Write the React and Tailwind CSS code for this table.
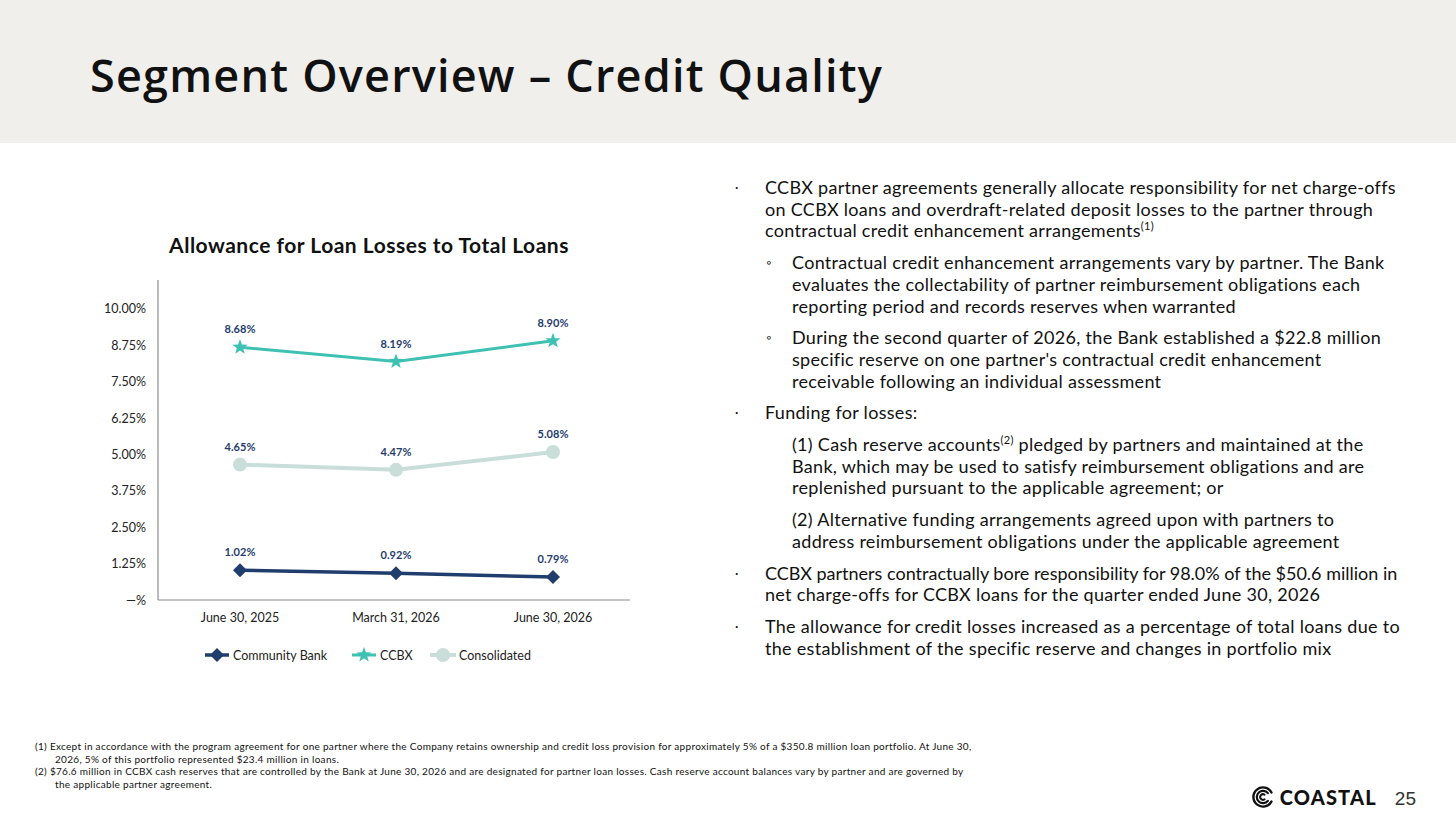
import React from "react";

const X = [240, 396, 553];
const yOf = (v) => 600 - v * 29.12;

const series = [
  { name: "Community Bank", color: "#1f3d6d", values: [1.02, 0.92, 0.79], marker: "diamond", width: 3.5 },
  { name: "CCBX", color: "#3ec1b3", values: [8.68, 8.19, 8.9], marker: "star", width: 3 },
  { name: "Consolidated", color: "#c9ddd9", values: [4.65, 4.47, 5.08], marker: "circle", width: 4 },
];

const ticks = ["—%", "1.25%", "2.50%", "3.75%", "5.00%", "6.25%", "7.50%", "8.75%", "10.00%"];

const starPoints = (cx, cy, R = 8, r = 3.3) =>
  Array.from({ length: 10 }, (_, i) => {
    const a = -Math.PI / 2 + (i * Math.PI) / 5;
    const rr = i % 2 ? r : R;
    return `${(cx + rr * Math.cos(a)).toFixed(2)},${(cy + rr * Math.sin(a)).toFixed(2)}`;
  }).join(" ");

const Marker = ({ type, x, y, color }) => {
  if (type === "diamond")
    return <polygon points={`${x},${y - 7} ${x + 7},${y} ${x},${y + 7} ${x - 7},${y}`} fill={color} />;
  if (type === "star") return <polygon points={starPoints(x, y)} fill={color} />;
  return <circle cx={x} cy={y} r={7} fill={color} />;
};

const Chart = () => (
  <div className="flex flex-col">
    <div className="h-[24px] w-[560px] pl-[18px] text-center text-[21px] leading-[24px] font-bold tracking-[0.5px] text-[#111]">
      Allowance for Loan Losses to Total Loans
    </div>
    <svg width="560" height="420" viewBox="80 257 560 420" className="font-['Lato',sans-serif]">
      <line x1="158" y1="280" x2="158" y2="600" stroke="#8c8c8c" strokeWidth="1.2" />
      <line x1="158" y1="600" x2="630" y2="600" stroke="#8c8c8c" strokeWidth="1.2" />
      {ticks.map((t, i) => (
        <text key={t} x="146" y={600 - i * 36.4 + 4.5} textAnchor="end" fontSize="12.5" fill="#222">
          {t}
        </text>
      ))}
      {["June 30, 2025", "March 31, 2026", "June 30, 2026"].map((t, i) => (
        <text key={t} x={X[i]} y="622" textAnchor="middle" fontSize="12.5" fill="#222">
          {t}
        </text>
      ))}
      {series.map((s) => (
        <g key={s.name}>
          <polyline
            points={s.values.map((v, i) => `${X[i]},${yOf(v)}`).join(" ")}
            fill="none"
            stroke={s.color}
            strokeWidth={s.width}
          />
          {s.values.map((v, i) => (
            <Marker key={i} type={s.marker} x={X[i]} y={yOf(v)} color={s.color} />
          ))}
          {s.values.map((v, i) => (
            <text
              key={"l" + i}
              x={X[i]}
              y={yOf(v) - 14}
              textAnchor="middle"
              fontSize="11"
              fontWeight="700"
              fill="#1f3d6d"
            >
              {v.toFixed(2)}%
            </text>
          ))}
        </g>
      ))}
      {/* legend */}
      <line x1="205" y1="655" x2="229" y2="655" stroke="#1f3d6d" strokeWidth="3.5" />
      <Marker type="diamond" x={217} y={655} color="#1f3d6d" />
      <text x="233" y="659.5" fontSize="12.5" fill="#222">Community Bank</text>
      <line x1="352" y1="655" x2="376" y2="655" stroke="#3ec1b3" strokeWidth="3" />
      <Marker type="star" x={364} y={655} color="#3ec1b3" />
      <text x="380" y="659.5" fontSize="12.5" fill="#222">CCBX</text>
      <line x1="430" y1="655" x2="456" y2="655" stroke="#c9ddd9" strokeWidth="4" />
      <Marker type="circle" x={443} y={655} color="#c9ddd9" />
      <text x="459" y="659.5" fontSize="12.5" fill="#222">Consolidated</text>
    </svg>
  </div>
);

const Bullet = ({ mark, indent, children, first }) => (
  <div className={`flex ${first ? "" : "mt-[10px]"}`}>
    <div className={`${indent ? "w-[57px] pl-[31px]" : "w-[30px]"} shrink-0 text-[13px]`}>{mark}</div>
    <div className="flex flex-col">{children}</div>
  </div>
);

const Sup = ({ n }) => <span className="text-[11px] leading-none align-[7px]">({n})</span>;

// arc drawn the long way round (through the left side)
const arc = (cx, cy, r, gap) => {
  const p = (a) => [cx + r * Math.cos((a * Math.PI) / 180), cy + r * Math.sin((a * Math.PI) / 180)];
  const [x0, y0] = p(gap);
  const [x1, y1] = p(360 - gap);
  return `M${x0.toFixed(2)} ${y0.toFixed(2)} A${r} ${r} 0 1 1 ${x1.toFixed(2)} ${y1.toFixed(2)}`;
};

const Logo = () => (
  <div className="flex items-center gap-[6px]">
    <svg width="22" height="22" viewBox="0 0 22 22">
      <path d={arc(11, 11, 9.6, 28)} fill="none" stroke="#111" strokeWidth="2.4" strokeLinecap="round" />
      <path d={arc(11, 11, 6.2, 38)} fill="none" stroke="#111" strokeWidth="2.2" strokeLinecap="round" />
      <path d={arc(11, 11, 2.8, 55)} fill="none" stroke="#111" strokeWidth="2" strokeLinecap="round" />
    </svg>
    <span className="text-[20px] leading-none font-black tracking-[1.2px] text-[#111]">COASTAL</span>
  </div>
);

export default function App() {
  return (
    <div className="w-[1456px] h-[814px] bg-white flex flex-col font-['Lato',sans-serif] text-[#111] overflow-hidden">
      <header className="h-[143px] bg-[#f0efeb] pl-[90px] pt-[46px] shrink-0">
        <h1 className="font-['Open_Sans',sans-serif] text-[45px] leading-[58px] font-semibold tracking-[1.2px]">
          Segment Overview – Credit Quality
        </h1>
      </header>

      <main className="h-[597px] flex shrink-0">
        <section className="w-[655px] pl-[80px] pt-[90px] shrink-0">
          <Chart />
        </section>
        <section className="pl-[80px] pt-[34px] text-[18px] leading-[21.7px] tracking-[0.3px] whitespace-nowrap">
          <Bullet mark="·" first>
            <span>CCBX partner agreements generally allocate responsibility for net charge-offs</span>
            <span>on CCBX loans and overdraft-related deposit losses to the partner through</span>
            <span>
              contractual credit enhancement arrangements<Sup n="1" />
            </span>
          </Bullet>
          <Bullet mark="◦" indent>
            <span>Contractual credit enhancement arrangements vary by partner. The Bank</span>
            <span>evaluates the collectability of partner reimbursement obligations each</span>
            <span>reporting period and records reserves when warranted</span>
          </Bullet>
          <Bullet mark="◦" indent>
            <span>During the second quarter of 2026, the Bank established a $22.8 million</span>
            <span>specific reserve on one partner's contractual credit enhancement</span>
            <span>receivable following an individual assessment</span>
          </Bullet>
          <Bullet mark="·">
            <span>Funding for losses:</span>
          </Bullet>
          <Bullet indent>
            <span>
              (1) Cash reserve accounts<Sup n="2" /> pledged by partners and maintained at the
            </span>
            <span>Bank, which may be used to satisfy reimbursement obligations and are</span>
            <span>replenished pursuant to the applicable agreement; or</span>
          </Bullet>
          <Bullet indent>
            <span>(2) Alternative funding arrangements agreed upon with partners to</span>
            <span>address reimbursement obligations under the applicable agreement</span>
          </Bullet>
          <Bullet mark="·">
            <span className="tracking-[0px]">CCBX partners contractually bore responsibility for 98.0% of the $50.6 million in</span>
            <span>net charge-offs for CCBX loans for the quarter ended June 30, 2026</span>
          </Bullet>
          <Bullet mark="·">
            <span>The allowance for credit losses increased as a percentage of total loans due to</span>
            <span>the establishment of the specific reserve and changes in portfolio mix</span>
          </Bullet>
        </section>
      </main>

      <footer className="flex-1 flex justify-between items-end pl-[35px] pr-[40px] pb-[6px]">
        <div className="self-start text-[10px] leading-[12.6px] tracking-[0.3px] whitespace-nowrap text-[#111]">
          <div>
            (1) Except in accordance with the program agreement for one partner where the Company retains ownership and
            credit loss provision for approximately 5% of a $350.8 million loan portfolio. At June 30,
          </div>
          <div className="pl-[20px]">2026, 5% of this portfolio represented $23.4 million in loans.</div>
          <div>
            (2) $76.6 million in CCBX cash reserves that are controlled by the Bank at June 30, 2026 and are designated
            for partner loan losses. Cash reserve account balances vary by partner and are governed by
          </div>
          <div className="pl-[20px]">the applicable partner agreement.</div>
        </div>
        <div className="flex items-end gap-[18px]">
          <Logo />
          <span className="font-['Liberation_Sans',sans-serif] text-[19px] leading-none text-[#333]">25</span>
        </div>
      </footer>
    </div>
  );
}
